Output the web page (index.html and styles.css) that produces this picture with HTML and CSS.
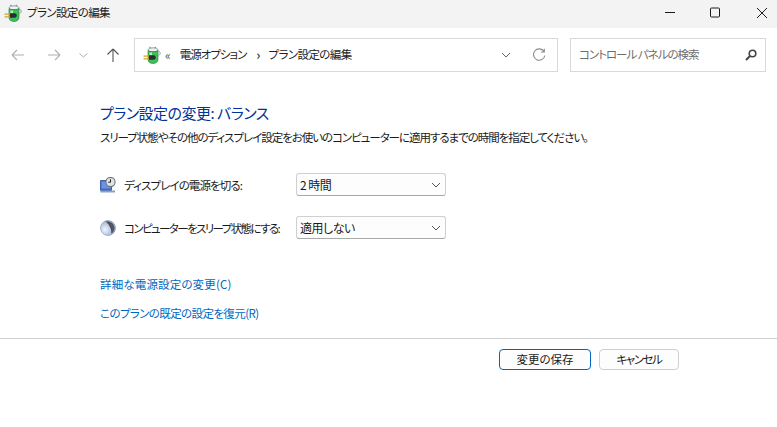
FILE: index.html
```html
<!DOCTYPE html>
<html lang="ja">
<head>
<meta charset="utf-8">
<title>プラン設定の編集</title>
<link rel="stylesheet" href="styles.css">
</head>
<body>
<svg class="defs" width="0" height="0" aria-hidden="true">
  <defs>
    <symbol id="power" viewBox="0 0 18 18">
      <path d="M6.500 .8 8.300 3M12.800 .8 11 3" stroke="#55606a" stroke-width="1" fill="none"/>
      <ellipse cx="10" cy="3.800" rx="5" ry="2" fill="#eef2f2" stroke="#7d8a8a" stroke-width=".8"/>
      <path d="M5 4.500v9c0 2.400 2.200 4 5 4s5-1.600 5-4v-9c-1 1.600-9 1.600-10 0z" fill="#3fc05a" stroke="#1f7a30" stroke-width=".6"/>
      <path d="M6.500 6.500h2.500v3H6.500z" fill="#b5efb0"/>
      <path d="M15 5c2.500.2 3 3.400.5 4.700" fill="none" stroke="#8a9aa0" stroke-width="1"/>
      <path d="M6 9.200h4.500a2.300 2.300 0 0 1 2.300 2.300a2.300 2.300 0 0 1-2.300 2.300H6z" fill="#2a2e33"/>
      <path d="M.5 10.200H6M.5 12.800H6" stroke="#d8a520" stroke-width="1.300"/>
    </symbol>
  </defs>
</svg>

<header class="titlebar">
  <svg class="app-icon" width="18" height="18"><use href="#power"/></svg>
  <span class="title">プラン設定の編集</span>
  <div class="win-controls">
    <svg class="win-btn" width="30" height="28" viewBox="8 0 30 28"><path d="M18 12.500h10" stroke="#1a1a1a" fill="none"/></svg>
    <svg class="win-btn" width="30" height="28" viewBox="8 0 30 28"><rect x="18.500" y="8" width="9" height="9" rx="1" stroke="#1a1a1a" fill="none"/></svg>
    <svg class="win-btn" width="30" height="28" viewBox="8 0 30 28"><path d="M18 8l10 10M28 8L18 18" stroke="#1a1a1a" fill="none"/></svg>
  </div>
</header>

<nav class="toolbar">
  <div class="nav-buttons">
    <svg class="nav-btn" width="36" height="16" viewBox="0 0 36 16"><path d="M12 8h12M12 8l5-5M12 8l5 5" stroke="#b0b0b0" fill="none" stroke-width="1.100"/></svg>
    <svg class="nav-btn" width="36" height="16" viewBox="0 0 36 16"><path d="M12 8h12M24 8l-5-5M24 8l-5 5" stroke="#b0b0b0" fill="none" stroke-width="1.100"/></svg>
    <svg class="nav-btn-small" width="24" height="16" viewBox="0 0 24 16"><path d="M7.500 6.500l4 3.500 4-3.500" stroke="#b0b0b0" fill="none"/></svg>
    <svg class="nav-btn" width="32" height="16" viewBox="0 0 32 16"><path d="M17 2v13M17 2l-5.500 5.500M17 2l5.500 5.500" stroke="#555" fill="none" stroke-width="1.100"/></svg>
  </div>
  <div class="address">
    <svg class="addr-icon" width="18" height="18"><use href="#power"/></svg>
    <span class="crumb-mark">«</span>
    <span class="crumb crumb-a">電源オプション</span>
    <span class="crumb-sep">›</span>
    <span class="crumb crumb-b">プラン設定の編集</span>
    <svg class="addr-chev" width="10" height="6" viewBox="0 0 10 6"><path d="M1 1l4 4 4-4" stroke="#666" fill="none"/></svg>
    <svg class="addr-refresh" width="14" height="14" viewBox="0 0 14 14"><path d="M12 3.500A5.700 5.700 0 1 0 12.800 7.500M12.300 .8v3.200H9" stroke="#8a8a8a" fill="none" stroke-width="1.100"/></svg>
  </div>
  <div class="search">
    <span class="search-text">コントロール パネルの検索</span>
    <svg width="14" height="14" viewBox="0 0 14 14"><circle cx="8.500" cy="5.500" r="3.300" fill="none" stroke="#444" stroke-width="1.600"/><path d="M6 8l-4 4" stroke="#444" stroke-width="2"/></svg>
  </div>
</nav>

<main class="content">
  <h1 class="heading">プラン設定の変更: バランス</h1>
  <p class="desc">スリープ状態やその他のディスプレイ設定をお使いのコンピューターに適用するまでの時間を指定してください。</p>

  <div class="setting first">
    <div class="setting-label">
      <svg width="16" height="16" viewBox="0 0 16 16">
        <path d="M.5 3.500h11v10H.5z" fill="#3f66c9" stroke="#2c4a9a" stroke-width=".8"/>
        <path d="M1.500 4.500h9.500v7H1.500z" fill="#6c92e6"/>
        <path d="M.5 13.500h14.500v2H.5z" fill="#8ba0c6"/>
        <circle cx="10.500" cy="5" r="4.600" fill="#dfe2e6" stroke="#6e7278" stroke-width="1.100"/>
        <path d="M10.500 2.300v2.900H8.200" stroke="#222" fill="none"/>
      </svg>
      <span class="label-text">ディスプレイの電源を切る:</span>
    </div>
    <div class="select">
      <span class="select-text">2 時間</span>
      <svg width="10" height="6" viewBox="0 0 10 6"><path d="M1 1l4 4 4-4" stroke="#555" fill="none"/></svg>
    </div>
  </div>

  <div class="setting">
    <div class="setting-label">
      <svg width="16" height="16" viewBox="0 0 16 16">
        <defs><radialGradient id="moon" cx=".3" cy=".6" r=".75"><stop offset="0" stop-color="#f2f6fc"/><stop offset="1" stop-color="#7f9dcc"/></radialGradient></defs>
        <circle cx="8" cy="8" r="7.500" fill="url(#moon)" stroke="#7f92b5" stroke-width=".6"/>
        <path d="M5.500 1.500c5-.3 8.800 2.500 8.800 6.500 0 3-1.500 4.800-3 5.500C12 9.500 9 4 5.500 1.500z" fill="#44474f"/>
        <path d="M8 3c3 2.500 4.500 6 3.800 10 1.500-1 2.500-3 2.500-5 0-2.500-2.500-4.800-6.300-5z" fill="#55585f"/>
      </svg>
      <span class="label-text label-long">コンピューターをスリープ状態にする:</span>
    </div>
    <div class="select">
      <span class="select-text">適用しない</span>
      <svg width="10" height="6" viewBox="0 0 10 6"><path d="M1 1l4 4 4-4" stroke="#555" fill="none"/></svg>
    </div>
  </div>

  <a class="link first-link" href="#">詳細な電源設定の変更(C)</a>
  <a class="link second-link" href="#">このプランの既定の設定を復元(R)</a>
</main>

<footer class="footer">
  <button class="btn primary" type="button">変更の保存</button>
  <button class="btn cancel" type="button">キャンセル</button>
</footer>
</body>
</html>
```
FILE: styles.css
```css
* { box-sizing: border-box; }
html, body { margin: 0; height: 100%; overflow: hidden; }
body {
  background: #fff;
  color: #1a1a1a;
  font-family: "Noto Sans CJK JP", "Noto Sans", sans-serif;
  font-feature-settings: "palt";
  font-size: 12px;
  line-height: 16px;
}
.defs { display: block; height: 0; }

.titlebar {
  display: flex;
  align-items: center;
  height: 28px;
  background: #f3f3f3;
  padding-left: 4px;
}
.app-icon { flex: none; margin-top: -2px; }
.title { margin-left: 5px; margin-top: -5px; font-size: 11.500px; letter-spacing: -.6px; color: #1a1a1a; }
.win-controls { display: flex; margin-left: auto; }
.win-btn { display: block; }
.win-btn:nth-child(2) { margin: 0 17px 0 15px; }

.toolbar {
  display: flex;
  align-items: center;
  height: 34px;
  margin-top: 10px;
  padding: 0 11px 0 0;
}
.nav-buttons { display: flex; align-items: center; width: 134px; flex: none; }
.nav-btn { display: block; flex: none; }
.nav-btn-small { display: block; flex: none; }
.address {
  display: flex;
  align-items: center;
  width: 424px;
  height: 34px;
  flex: none;
  border: 1px solid #d9d9d9;
  padding: 0 11px 0 8px;
}
.addr-icon { flex: none; }
.crumb-mark { margin-left: 4px; margin-right: 9px; color: #555; font-size: 12px; }
.crumb { font-size: 11.500px; line-height: 14px; margin-bottom: 2px; color: #222; }
.crumb-a { letter-spacing: -1px; }
.crumb-b { letter-spacing: -.6px; }
.crumb-sep { margin: 0 8px 0 10px; color: #444; font-size: 13px; font-weight: 700; }
.addr-chev { margin-left: auto; flex: none; }
.addr-refresh { margin-left: 21px; flex: none; }
.search {
  display: flex;
  align-items: center;
  justify-content: space-between;
  width: 196px;
  height: 34px;
  margin-left: 12px;
  border: 1px solid #d9d9d9;
  padding: 0 7px 0 8px;
  color: #6d6d6d;
  font-size: 11.500px;
}
.search-text { letter-spacing: -1px; margin-bottom: 2px; }

.content { padding: 30px 0 0 100px; }
.heading {
  margin: 0;
  font-size: 15px;
  line-height: 22px;
  font-weight: 400;
  letter-spacing: -.5px;
  color: #003399;
}
.desc { margin: 5px 0 0; font-size: 11.500px; line-height: 16px; letter-spacing: -1.040px; color: #1a1a1a; }

.setting { display: flex; align-items: center; height: 23px; margin-top: 20px; }
.setting.first { margin-top: 28px; }
.setting-label { display: flex; align-items: center; width: 196px; flex: none; font-size: 11.500px; white-space: nowrap; }
.setting-label svg { flex: none; margin-right: 8px; }
.label-text { letter-spacing: -.9px; }
.label-long { letter-spacing: -1.600px; }
.select {
  display: flex;
  align-items: center;
  justify-content: space-between;
  width: 150px;
  height: 23px;
  border: 1px solid #d0d0d0;
  border-bottom-color: #a8a8a8;
  border-radius: 3px;
  padding: 0 4px 0 3px;
  background: #fdfdfd;
  font-size: 12px;
}
.select-text { letter-spacing: -.5px; }

.link { display: block; width: max-content; color: #0067c0; text-decoration: none; font-size: 11.500px; }
.first-link { margin-top: 37px; letter-spacing: .15px; }
.second-link { margin-top: 13px; letter-spacing: -.6px; }

.footer {
  display: flex;
  gap: 8px;
  margin-top: 17px;
  padding: 10px 0 0 499px;
  border-top: 1px solid #d0d0d0;
}
.btn {
  height: 21px;
  padding: 0;
  border-radius: 4px;
  background: #fdfdfd;
  font: inherit;
  font-size: 11.500px;
  line-height: 1;
  color: #1a1a1a;
}
.btn.primary { width: 92px; border: 1px solid #0067c0; }
.btn.cancel { width: 80px; border: 1px solid #cfcfcf; letter-spacing: -1.400px; }
```
